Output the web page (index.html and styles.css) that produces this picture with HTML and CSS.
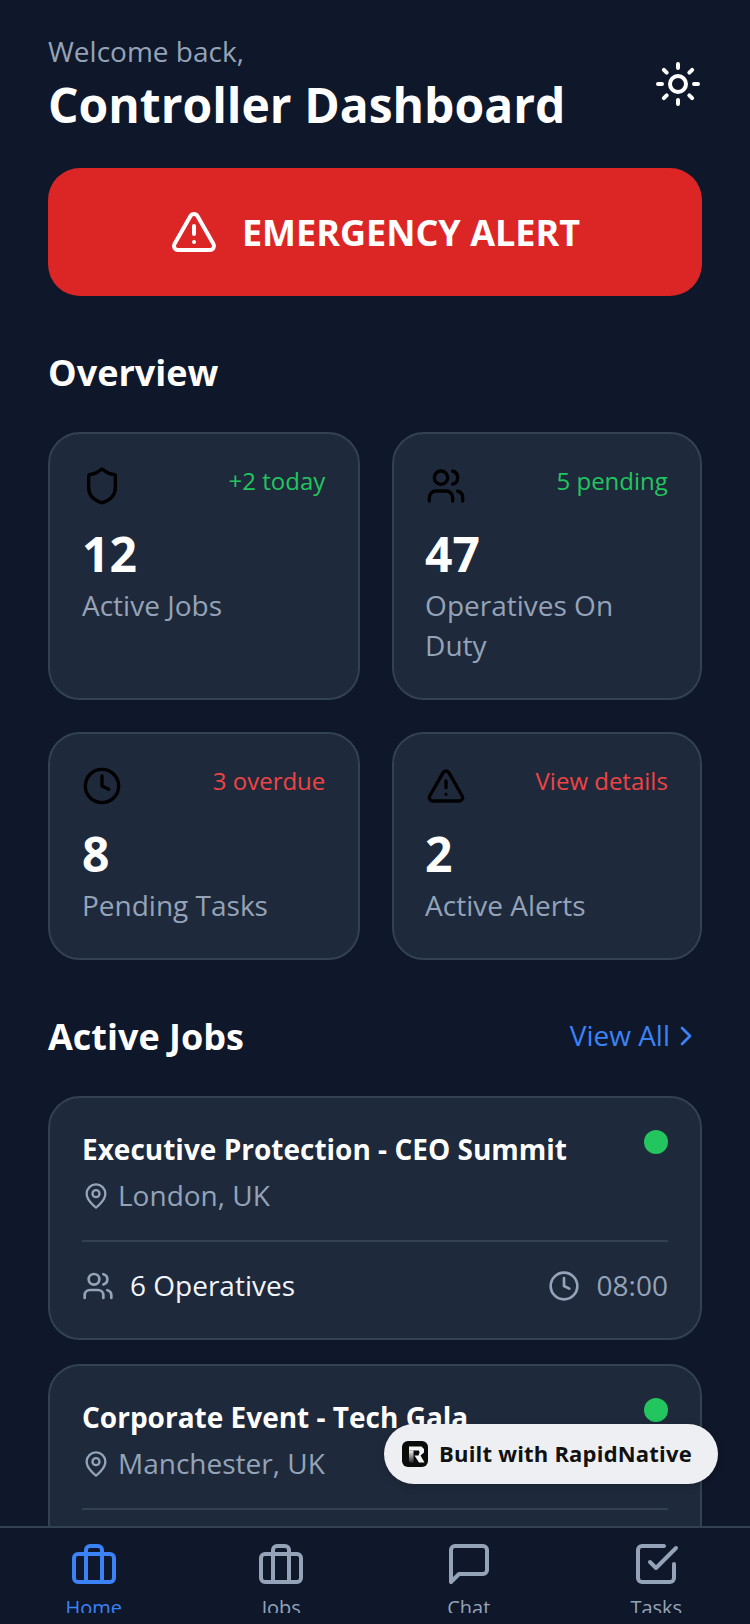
FILE: index.html
```html
<!DOCTYPE html>
<html lang="en">
<head>
    <meta charset="UTF-8">
    <meta name="viewport" content="width=device-width, initial-scale=1.0">
    <title>Controller Dashboard</title>
    <link rel="stylesheet" href="styles.css">
</head>
<body>
    <div class="screen">
        <main class="content">
            <header class="header">
                <div>
                    <p class="welcome">Welcome back,</p>
                    <h1 class="title">Controller Dashboard</h1>
                </div>
                <svg class="icon icon-sun" viewBox="0 0 24 24"><circle cx="12" cy="12" r="4"/><path d="M12 2v2M12 20v2M4.93 4.93l1.41 1.41M17.66 17.66l1.41 1.41M2 12h2M20 12h2M6.34 17.66l-1.41 1.41M19.07 4.93l-1.41 1.41"/></svg>
            </header>

            <button class="emergency">
                <svg class="icon icon-emergency" viewBox="0 0 24 24"><path d="m21.73 18-8-14a2 2 0 0 0-3.48 0l-8 14A2 2 0 0 0 4 21h16a2 2 0 0 0 1.73-3Z"/><path d="M12 9v4M12 17h.01"/></svg>
                <span>EMERGENCY ALERT</span>
            </button>

            <h2 class="section-title">Overview</h2>
            <div class="stats">
                <div class="card stat">
                    <div class="stat-top">
                        <svg class="icon icon-stat" viewBox="0 0 24 24"><path d="M20 13c0 5-3.5 7.5-7.66 8.95a1 1 0 0 1-.67-.01C7.5 20.5 4 18 4 13V6a1 1 0 0 1 1-1c2 0 4.5-1.2 6.24-2.72a1.17 1.17 0 0 1 1.52 0C14.51 3.81 17 5 19 5a1 1 0 0 1 1 1z"/></svg>
                        <span class="note good">+2 today</span>
                    </div>
                    <div class="stat-value">12</div>
                    <div class="stat-label">Active Jobs</div>
                </div>
                <div class="card stat">
                    <div class="stat-top">
                        <svg class="icon icon-stat" viewBox="0 0 24 24"><path d="M16 21v-2a4 4 0 0 0-4-4H6a4 4 0 0 0-4 4v2"/><circle cx="9" cy="7" r="4"/><path d="M22 21v-2a4 4 0 0 0-3-3.87M16 3.13a4 4 0 0 1 0 7.75"/></svg>
                        <span class="note good">5 pending</span>
                    </div>
                    <div class="stat-value">47</div>
                    <div class="stat-label">Operatives On Duty</div>
                </div>
                <div class="card stat">
                    <div class="stat-top">
                        <svg class="icon icon-stat" viewBox="0 0 24 24"><circle cx="12" cy="12" r="10"/><path d="M12 6v6l4 2"/></svg>
                        <span class="note bad">3 overdue</span>
                    </div>
                    <div class="stat-value">8</div>
                    <div class="stat-label">Pending Tasks</div>
                </div>
                <div class="card stat">
                    <div class="stat-top">
                        <svg class="icon icon-stat" viewBox="0 0 24 24"><path d="m21.73 18-8-14a2 2 0 0 0-3.48 0l-8 14A2 2 0 0 0 4 21h16a2 2 0 0 0 1.73-3Z"/><path d="M12 9v4M12 17h.01"/></svg>
                        <span class="note bad">View details</span>
                    </div>
                    <div class="stat-value">2</div>
                    <div class="stat-label">Active Alerts</div>
                </div>
            </div>

            <div class="section-row">
                <h2 class="section-title">Active Jobs</h2>
                <a class="view-all"><span>View All</span>
                    <svg class="icon icon-chevron" viewBox="0 0 24 24"><path d="m9 18 6-6-6-6"/></svg>
                </a>
            </div>

            <div class="card job">
                <div class="job-head">
                    <h3 class="job-title">Executive Protection - CEO Summit</h3>
                    <span class="dot"></span>
                </div>
                <div class="job-place">
                    <svg class="icon icon-pin" viewBox="0 0 24 24"><path d="M20 10c0 6-8 12-8 12s-8-6-8-12a8 8 0 0 1 16 0Z"/><circle cx="12" cy="10" r="3"/></svg>
                    <span>London, UK</span>
                </div>
                <div class="job-foot">
                    <div class="job-meta">
                        <svg class="icon icon-meta" viewBox="0 0 24 24"><path d="M16 21v-2a4 4 0 0 0-4-4H6a4 4 0 0 0-4 4v2"/><circle cx="9" cy="7" r="4"/><path d="M22 21v-2a4 4 0 0 0-3-3.87M16 3.13a4 4 0 0 1 0 7.75"/></svg>
                        <span class="crew">6 Operatives</span>
                    </div>
                    <div class="job-meta">
                        <svg class="icon icon-meta" viewBox="0 0 24 24"><circle cx="12" cy="12" r="10"/><path d="M12 6v6l4 2"/></svg>
                        <span class="time">08:00</span>
                    </div>
                </div>
            </div>

            <div class="card job">
                <div class="job-head">
                    <h3 class="job-title">Corporate Event - Tech Gala</h3>
                    <span class="dot"></span>
                </div>
                <div class="job-place">
                    <svg class="icon icon-pin" viewBox="0 0 24 24"><path d="M20 10c0 6-8 12-8 12s-8-6-8-12a8 8 0 0 1 16 0Z"/><circle cx="12" cy="10" r="3"/></svg>
                    <span>Manchester, UK</span>
                </div>
                <div class="job-foot">
                    <div class="job-meta">
                        <svg class="icon icon-meta" viewBox="0 0 24 24"><path d="M16 21v-2a4 4 0 0 0-4-4H6a4 4 0 0 0-4 4v2"/><circle cx="9" cy="7" r="4"/><path d="M22 21v-2a4 4 0 0 0-3-3.87M16 3.13a4 4 0 0 1 0 7.75"/></svg>
                        <span class="crew">4 Operatives</span>
                    </div>
                </div>
            </div>
        </main>

        <nav class="tabs">
            <div class="tab active">
                <svg class="icon icon-tab" viewBox="0 0 24 24"><path d="M16 21V5a2 2 0 0 0-2-2h-4a2 2 0 0 0-2 2v16"/><rect x="2" y="7" width="20" height="14" rx="2"/></svg>
                <span class="tab-label">Home</span>
            </div>
            <div class="tab">
                <svg class="icon icon-tab" viewBox="0 0 24 24"><path d="M16 21V5a2 2 0 0 0-2-2h-4a2 2 0 0 0-2 2v16"/><rect x="2" y="7" width="20" height="14" rx="2"/></svg>
                <span class="tab-label">Jobs</span>
            </div>
            <div class="tab">
                <svg class="icon icon-tab" viewBox="0 0 24 24"><path d="M21 15a2 2 0 0 1-2 2H7l-4 4V5a2 2 0 0 1 2-2h14a2 2 0 0 1 2 2z"/></svg>
                <span class="tab-label">Chat</span>
            </div>
            <div class="tab">
                <svg class="icon icon-tab" viewBox="0 0 24 24"><path d="m9 11 3 3L22 4"/><path d="M21 12v7a2 2 0 0 1-2 2H5a2 2 0 0 1-2-2V5a2 2 0 0 1 2-2h11"/></svg>
                <span class="tab-label">Tasks</span>
            </div>
        </nav>

        <div class="built">
            <svg class="built-logo" viewBox="0 0 26 26">
                <defs>
                    <linearGradient id="stem" x1="0" y1="0" x2="0" y2="1">
                        <stop offset="0" stop-color="#f4f4f5"/>
                        <stop offset="1" stop-color="#2a2a2c"/>
                    </linearGradient>
                </defs>
                <rect width="26" height="26" rx="6" fill="#0b0b0c"/>
                <path d="M7 5.5H19.5L22 8V11.5L18.5 14.5L22.5 21.5H17L12.5 14.5H16.5L17.5 11.5L17 9.5H7Z" fill="#f4f4f5"/>
                <path d="M7 9.5H11.5V21.5H8L7 20.5Z" fill="url(#stem)"/>
            </svg>
            <span>Built with RapidNative</span>
        </div>
    </div>
</body>
</html>
```

FILE: styles.css
```css
* {
    box-sizing: border-box;
}
html, body {
    margin: 0;
    padding: 0;
}
body {
    font-family: "Open Sans", "Noto Sans", sans-serif;
    background: #0f172a;
    color: #fff;
}
h1, h2, h3, p {
    margin: 0;
}
.screen {
    position: relative;
    width: 750px;
    height: 1624px;
    display: flex;
    flex-direction: column;
    overflow: hidden;
}
.content {
    flex: 1;
    min-height: 0;
    overflow: hidden;
    padding: 32px 48px;
}
.icon {
    flex: none;
    fill: none;
    stroke: currentColor;
    stroke-width: 2;
    stroke-linecap: round;
    stroke-linejoin: round;
}

/* header */
.header {
    display: flex;
    justify-content: space-between;
    align-items: center;
    margin-bottom: 32px;
}
.welcome {
    margin: -1px 0 2px;
    font-size: 28px;
    line-height: 40px;
    color: #94a3b8;
}
.title {
    margin: 0 0 -1px;
    font-size: 48px;
    line-height: 64px;
    font-weight: 700;
}
.icon-sun {
    width: 48px;
    height: 48px;
    color: #fff;
}

/* emergency button */
.emergency {
    width: 100%;
    height: 128px;
    display: flex;
    align-items: center;
    justify-content: center;
    gap: 24px;
    border: none;
    border-radius: 32px;
    background: #dc2626;
    color: #fff;
    font-family: inherit;
    font-size: 36px;
    font-weight: 700;
}
.icon-emergency {
    width: 48px;
    height: 48px;
}

/* overview */
.section-title {
    margin: 1px 0 -1px;
    font-size: 36px;
    line-height: 56px;
    font-weight: 700;
}
.emergency + .section-title {
    margin-top: 49px;
    margin-bottom: 31px;
}
.card {
    background: #1e293b;
    border: 2px solid #334155;
    border-radius: 32px;
    padding: 32px;
}
.stats {
    display: grid;
    grid-template-columns: 311.5px 1fr;
    gap: 32px;
}
.stat-top {
    display: flex;
    justify-content: space-between;
    align-items: flex-start;
    margin-bottom: 16px;
}
.icon-stat {
    width: 40px;
    height: 40px;
    color: #000;
}
.note {
    margin: -1px 0.2px 1px 0;
    font-size: 24px;
    line-height: 32px;
}
.good {
    color: #22c55e;
}
.bad {
    color: #ef4444;
}
.stat-value {
    font-size: 48px;
    line-height: 64px;
    font-weight: 700;
}
.stat-label {
    margin: -1px 0 1px;
    font-size: 28px;
    line-height: 40px;
    color: #94a3b8;
}
.stat:nth-child(even) .stat-value,
.stat:nth-child(even) .stat-label {
    margin-left: -0.4px;
}

/* active jobs */
.section-row {
    display: flex;
    justify-content: space-between;
    align-items: center;
    margin: 48px 0 32px;
}
.view-all {
    display: flex;
    align-items: center;
    font-size: 28px;
    color: #3b82f6;
}
.view-all span {
    margin: -1px 0 1px;
}
.icon-chevron {
    width: 32px;
    height: 32px;
}
.job {
    margin-bottom: 24px;
}
.job-head {
    display: flex;
    justify-content: space-between;
    align-items: flex-start;
}
.job-title {
    margin: -1px 0 1px;
    font-size: 28px;
    line-height: 40px;
    font-weight: 700;
}
.dot {
    flex: none;
    width: 24px;
    height: 24px;
    border-radius: 50%;
    background: #22c55e;
}
.job-place {
    display: flex;
    align-items: center;
    gap: 8px;
    margin-top: 6px;
    font-size: 28px;
    line-height: 40px;
    color: #94a3b8;
}
.job-place span {
    margin: -1px 0 1px;
}
.icon-pin {
    width: 28px;
    height: 28px;
}
.job-foot {
    display: flex;
    justify-content: space-between;
    align-items: center;
    margin-top: 24px;
    padding-top: 24px;
    border-top: 2px solid #334155;
}
.job-meta {
    display: flex;
    align-items: center;
    gap: 16px;
    font-size: 28px;
    line-height: 40px;
    color: #94a3b8;
}
.job-meta span {
    margin: -1px 0 1px;
}
.icon-meta {
    width: 32px;
    height: 32px;
}
.crew {
    color: #f1f5f9;
}
.time {
    padding-left: 1px;
}

/* bottom tabs */
.tabs {
    flex: none;
    height: 98px;
    display: grid;
    grid-template-columns: repeat(4, 1fr);
    padding: 12px 0 11px;
    background: #0f172a;
    border-top: 2px solid #334155;
}
.tab {
    display: flex;
    flex-direction: column;
    align-items: center;
    gap: 6px;
    overflow: hidden;
    color: #94a3b8;
}
.tab.active {
    color: #3b82f6;
}
.icon-tab {
    width: 48px;
    height: 48px;
}
.tab-label {
    font-size: 20px;
    line-height: 28px;
}

/* floating badge */
.built {
    position: absolute;
    left: 384px;
    top: 1424px;
    width: 334px;
    height: 60px;
    display: flex;
    align-items: center;
    gap: 11px;
    padding-left: 18px;
    border-radius: 30px;
    background: #eeeff2;
    color: #111;
    font-size: 22px;
    font-weight: 700;
    letter-spacing: 0.2px;
    box-shadow: 0 2px 8px rgba(0,0,0,0.2);
}
.built span {
    margin: -1px 0 1px;
}
.built-logo {
    flex: none;
    width: 26px;
    height: 26px;
}
```
